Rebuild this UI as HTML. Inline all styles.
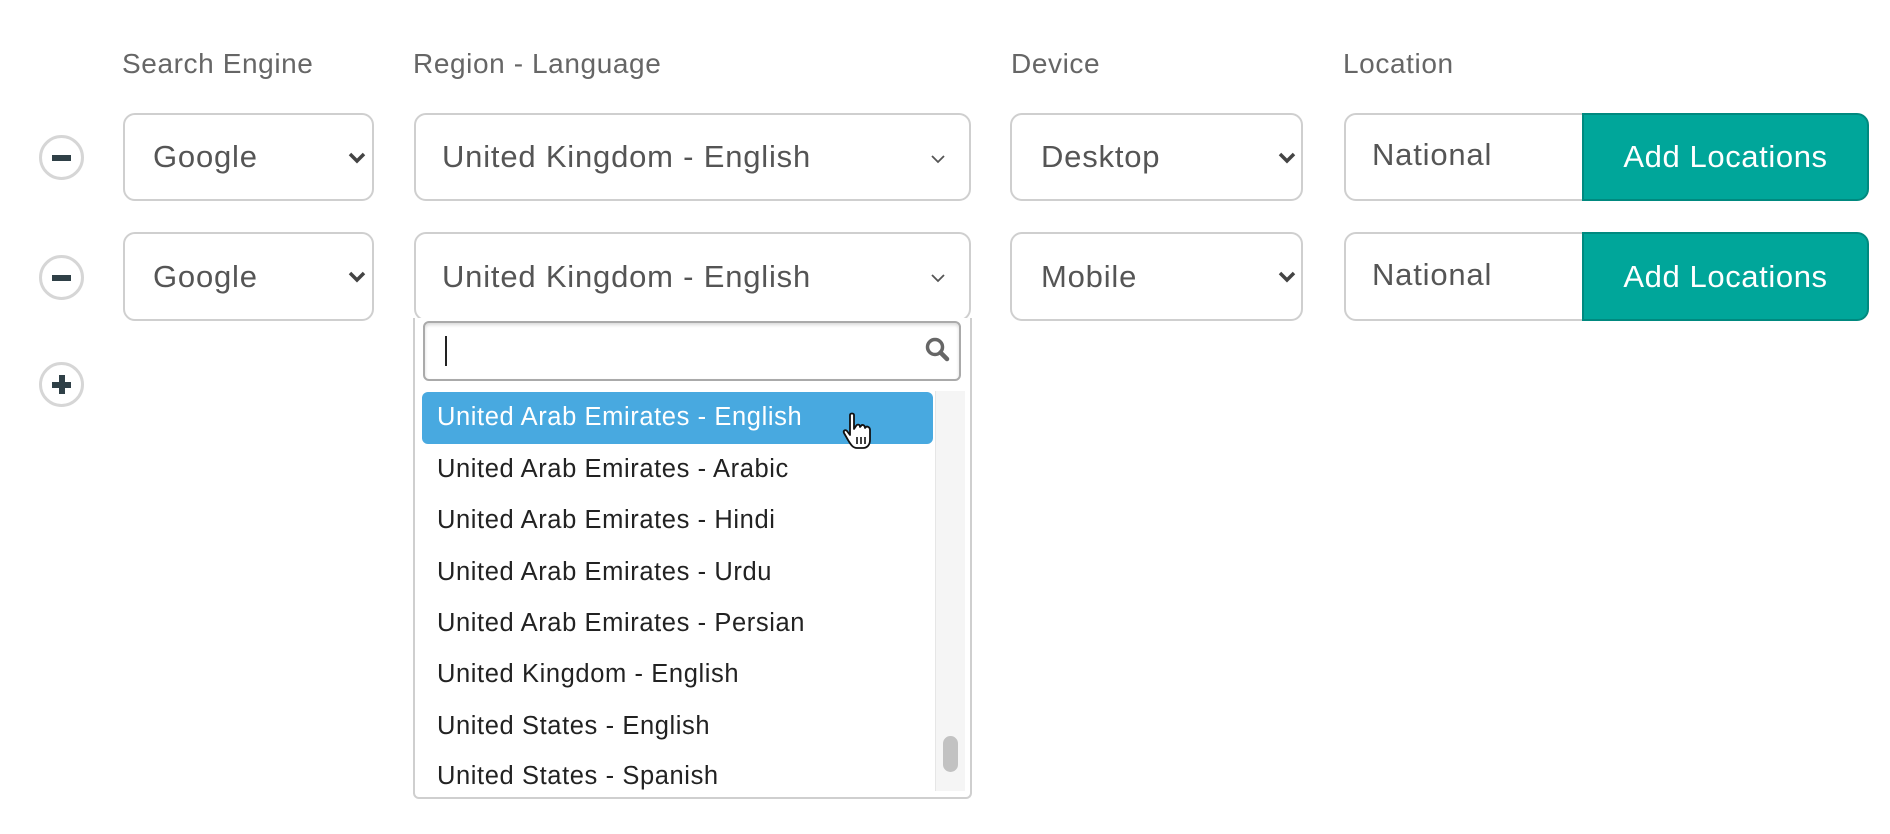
<!DOCTYPE html>
<html><head><meta charset="utf-8"><style>
*{box-sizing:border-box;margin:0;padding:0}
body{width:1890px;height:834px;background:#fff;font-family:"Liberation Sans",sans-serif;position:relative;overflow:hidden}
.abs{position:absolute}
.lbl{font-size:28px;color:#666;top:48px;letter-spacing:0.6px}
.box{position:absolute;border:2px solid #cfcfcf;border-radius:12px;background:#fff;color:#555;font-size:31px;display:flex;align-items:center;letter-spacing:0.8px}
.circ{position:absolute;width:45px;height:45px;border:3px solid #d6d6d6;border-radius:50%}
.circ .h{position:absolute;left:10px;top:17px;width:19px;height:6px;background:#2f4047}
.circ .v{position:absolute;left:17px;top:10px;width:6px;height:19px;background:#2f4047}
.btn{position:absolute;background:#00a69a;border:2px solid #00897f;border-radius:0 12px 12px 0;color:#fff;font-size:31px;display:flex;align-items:center;justify-content:center;letter-spacing:0.6px}
.item{position:absolute;left:437px;font-size:25.5px;color:#222;height:52px;line-height:52px;letter-spacing:0.6px}
</style></head><body>
<div class="abs lbl" style="left:122px">Search Engine</div>
<div class="abs lbl" style="left:413px">Region - Language</div>
<div class="abs lbl" style="left:1011px">Device</div>
<div class="abs lbl" style="left:1343px">Location</div>

<div class="circ" style="left:39px;top:135px"><div class="h"></div></div>
<div class="circ" style="left:39px;top:255px"><div class="h"></div></div>
<div class="circ" style="left:39px;top:362px"><div class="h"></div><div class="v"></div></div>

<!-- row 1 -->
<div class="box" style="left:123px;top:113px;width:251px;height:88px;padding-left:28px">Google
<svg class="abs" style="left:223px;top:37px" width="18" height="12" viewBox="0 0 18 12"><path d="M2 2 L9 9 L16 2" fill="none" stroke="#444" stroke-width="3.5"/></svg></div>
<div class="box" style="left:414px;top:113px;width:557px;height:88px;padding-left:26px">United Kingdom - English
<svg class="abs" style="left:514px;top:39px" width="16" height="10" viewBox="0 0 16 10"><path d="M2 2 L8 8 L14 2" fill="none" stroke="#555" stroke-width="1.8"/></svg></div>
<div class="box" style="left:1010px;top:113px;width:293px;height:88px;padding-left:29px">Desktop
<svg class="abs" style="left:266px;top:37px" width="18" height="12" viewBox="0 0 18 12"><path d="M2 2 L9 9 L16 2" fill="none" stroke="#444" stroke-width="3.5"/></svg></div>
<div class="box" style="left:1344px;top:113px;width:240px;height:88px;padding-left:26px;border-radius:12px 0 0 12px;padding-bottom:4px">National</div>
<div class="btn" style="left:1582px;top:113px;width:287px;height:88px">Add Locations</div>

<!-- row 2 -->
<div class="box" style="left:123px;top:232px;width:251px;height:89px;padding-left:28px">Google
<svg class="abs" style="left:223px;top:37px" width="18" height="12" viewBox="0 0 18 12"><path d="M2 2 L9 9 L16 2" fill="none" stroke="#444" stroke-width="3.5"/></svg></div>
<div class="box" style="left:414px;top:232px;width:557px;height:89px;padding-left:26px">United Kingdom - English
<svg class="abs" style="left:514px;top:39px" width="16" height="10" viewBox="0 0 16 10"><path d="M2 2 L8 8 L14 2" fill="none" stroke="#555" stroke-width="1.8"/></svg></div>
<div class="box" style="left:1010px;top:232px;width:293px;height:89px;padding-left:29px">Mobile
<svg class="abs" style="left:266px;top:37px" width="18" height="12" viewBox="0 0 18 12"><path d="M2 2 L9 9 L16 2" fill="none" stroke="#444" stroke-width="3.5"/></svg></div>
<div class="box" style="left:1344px;top:232px;width:240px;height:89px;padding-left:26px;border-radius:12px 0 0 12px;padding-bottom:4px">National</div>
<div class="btn" style="left:1582px;top:232px;width:287px;height:89px">Add Locations</div>

<!-- dropdown -->
<div class="abs" style="left:413px;top:318px;width:559px;height:481px;border:2px solid #cfcfcf;border-top:none;border-radius:0 0 6px 6px;background:#fff"></div>
<div class="abs" style="left:423px;top:321px;width:538px;height:60px;border:2px solid #aaa;border-radius:6px;background:#fff;box-shadow:inset 0 2px 3px rgba(0,0,0,.15)"></div>
<div class="abs" style="left:445px;top:336px;width:2px;height:30px;background:#222"></div>
<svg class="abs" style="left:924px;top:336px" width="28" height="28" viewBox="0 0 28 28"><circle cx="11" cy="11" r="7.5" fill="none" stroke="#666" stroke-width="3.5"/><path d="M16.5 16.5 L23 23" stroke="#666" stroke-width="4.5" stroke-linecap="round"/></svg>
<div class="abs" style="left:935px;top:391px;width:30px;height:400px;background:#f5f5f5;border-left:1px solid #e6e6e6"></div>
<div class="abs" style="left:943px;top:736px;width:15px;height:36px;background:#c2c2c2;border-radius:8px"></div>
<div class="abs" style="left:422px;top:392px;width:511px;height:52px;background:#48a9e0;border-radius:6px"></div>
<div class="item" style="top:391px;color:#fff">United Arab Emirates - English</div>
<div class="item" style="top:443px">United Arab Emirates - Arabic</div>
<div class="item" style="top:494px">United Arab Emirates - Hindi</div>
<div class="item" style="top:546px">United Arab Emirates - Urdu</div>
<div class="item" style="top:597px">United Arab Emirates - Persian</div>
<div class="item" style="top:648px">United Kingdom - English</div>
<div class="item" style="top:700px">United States - English</div>
<div class="item" style="top:750px">United States - Spanish</div>
<!-- cursor -->
<svg class="abs" style="left:842px;top:412px" width="34" height="40" viewBox="0 0 34 40"><path d="M8 3 C8 1 12 1 12 3 L12 17 L14 14 C15 12 18 12 18 15 L19 14 C20 12 23 13 23 16 L24 15 C25 14 28 15 28 18 L28 28 C28 33 25 36 21 36 L15 36 C11 36 9 33 6 28 L2 21 C1 19 3 17 5 19 L8 23 Z" fill="#fff" stroke="#111" stroke-width="1.8" stroke-linejoin="round"/><path d="M15 25 V32 M19 25 V32 M23 25 V32" stroke="#111" stroke-width="1.6"/></svg>
</body></html>
